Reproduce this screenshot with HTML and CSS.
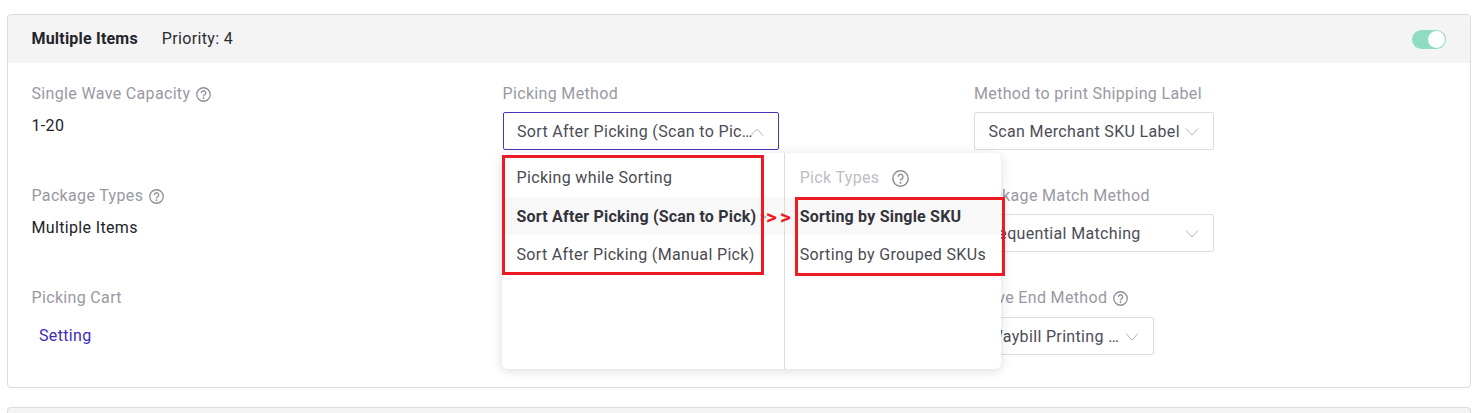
FILE: index.html
```html
<!DOCTYPE html>
<html lang="en">
<head>
<meta charset="utf-8">
<title>Wave rule</title>
<link rel="stylesheet" href="styles.css">
</head>
<body>
<section class="card">
  <header class="card-head">
    <strong class="title">Multiple Items</strong>
    <span class="priority">Priority: 4</span>
    <span class="switch"><span class="knob"></span></span>
  </header>
  <div class="card-body">
    <div class="col">
      <div class="field">
        <div class="label">Single Wave Capacity <svg class="help" viewBox="0 0 16 16"><circle cx="8" cy="8" r="7.2"/><path d="M5.7 6.3a2.3 2.3 0 1 1 3.5 2c-.8.5-1.2.9-1.2 1.8"/><circle class="dot" cx="8" cy="12" r="1"/></svg></div>
        <div class="value">1-20</div>
      </div>
      <div class="field">
        <div class="label">Package Types <svg class="help" viewBox="0 0 16 16"><circle cx="8" cy="8" r="7.2"/><path d="M5.7 6.3a2.3 2.3 0 1 1 3.5 2c-.8.5-1.2.9-1.2 1.8"/><circle class="dot" cx="8" cy="12" r="1"/></svg></div>
        <div class="value">Multiple Items</div>
      </div>
      <div class="field">
        <div class="label">Picking Cart</div>
        <a class="link" href="#">Setting</a>
      </div>
    </div>
    <div class="col">
      <div class="field">
        <div class="label">Picking Method</div>
        <div class="select open">
          <span class="select-text">Sort After Picking (Scan to Pic…</span>
          <svg class="chev" viewBox="0 0 14 8"><path d="M1 7.5l6-6.5 6 6.5"/></svg>
        </div>
      </div>
    </div>
    <div class="col">
      <div class="field">
        <div class="label">Method to print Shipping Label</div>
        <div class="select wide">
          <span class="select-text">Scan Merchant SKU Label</span>
          <svg class="chev" viewBox="0 0 14 8"><path d="M1 .5l6 6.5 6-6.5"/></svg>
        </div>
      </div>
      <div class="field">
        <div class="label">Package Match Method</div>
        <div class="select wide">
          <span class="select-text">Sequential Matching</span>
          <svg class="chev" viewBox="0 0 14 8"><path d="M1 .5l6 6.5 6-6.5"/></svg>
        </div>
      </div>
      <div class="field">
        <div class="label">Wave End Method <svg class="help" viewBox="0 0 16 16"><circle cx="8" cy="8" r="7.2"/><path d="M5.7 6.3a2.3 2.3 0 1 1 3.5 2c-.8.5-1.2.9-1.2 1.8"/><circle class="dot" cx="8" cy="12" r="1"/></svg></div>
        <div class="select narrow">
          <span class="select-text">Waybill Printing …</span>
          <svg class="chev" viewBox="0 0 14 8"><path d="M1 .5l6 6.5 6-6.5"/></svg>
        </div>
      </div>
    </div>
  </div>
  <div class="popup">
    <ul class="menu menu-left">
      <li class="opt">Picking while Sorting</li>
      <li class="opt active">Sort After Picking (Scan to Pick)<span class="caret">&gt;</span></li>
      <li class="opt">Sort After Picking (Manual Pick)</li>
    </ul>
    <ul class="menu menu-right">
      <li class="opt heading">Pick Types <svg class="help big" viewBox="0 0 16 16"><circle cx="8" cy="8" r="7.2"/><path d="M5.7 6.3a2.3 2.3 0 1 1 3.5 2c-.8.5-1.2.9-1.2 1.8"/><circle class="dot" cx="8" cy="12" r="1"/></svg></li>
      <li class="opt active">Sorting by Single SKU</li>
      <li class="opt">Sorting by Grouped SKUs</li>
    </ul>
  </div>
  <div class="mark mark-left"></div>
  <div class="mark mark-right"></div>
  <div class="arrows">&gt; &gt;</div>
</section>
<section class="card next"></section>
</body>
</html>
```

FILE: styles.css
```css
* { box-sizing: border-box; }
html, body { margin: 0; height: 413px; overflow: hidden; }
body {
  padding: 14px 10px 0 7px;
  background: #fff;
  font-family: Roboto, "Liberation Sans", sans-serif;
  font-size: 16px;
  line-height: 24px;
  letter-spacing: .34px;
  color: #2b2b33;
}
.card {
  position: relative;
  height: 374px;
  border: 1px solid #dcdcdc;
  border-radius: 4px;
}
.card.next {
  margin-top: 19px;
  height: 6px;
  border-bottom: 0;
  border-radius: 4px 4px 0 0;
  background: #f4f4f4;
}
.card-head {
  display: flex;
  align-items: center;
  height: 48px;
  padding: 0 24px 0 23.5px;
  background: #f4f4f4;
  border-radius: 4px 4px 0 0;
}
.title { font-weight: 700; letter-spacing: .2px; margin-right: 24px; color: #24242c; }
.priority { color: #2b2b33; }
.switch {
  display: flex;
  justify-content: flex-end;
  align-items: center;
  width: 34px;
  height: 19px;
  margin-left: auto;
  padding-right: 1px;
  border-radius: 10px;
  background: #8fdcc5;
}
.knob { width: 17px; height: 17px; border-radius: 50%; background: #fff; }
.card-body {
  display: grid;
  grid-template-columns: 471px 471.5px 1fr;
  padding: 18px 23.5px 0;
}
.field { height: 102px; padding-top: 1px; }
.label { display: flex; align-items: center; gap: 6px; height: 24px; color: #9a98a3; }
.value { margin-top: 8px; color: #22222a; }
.link { display: block; margin: 14px 0 0 7.5px; color: #3f2bb8; text-decoration: none; }
.help { width: 15px; height: 15px; fill: none; stroke: #8f8e98; stroke-width: 1.4; flex: none; margin-top: 1px; }
.help .dot { fill: #8f8e98; stroke: none; }
.help.big { width: 17px; height: 17px; margin: 0 0 0 13px; }
.select {
  display: flex;
  align-items: center;
  width: 276px;
  height: 38px;
  margin-top: 6px;
  padding: 1px 14px 0 13.5px;
  border: 1px solid #dcdcdc;
  border-radius: 2px;
  color: #4c4c58;
}
.select.wide { width: 240px; }
.select.narrow { width: 180px; margin-top: 7px; }
.select.open { border-color: #4a35b5; }
.select-text { flex: 1; min-width: 0; white-space: nowrap; }
.chev { flex: none; width: 14px; height: 8px; margin-left: 5px; fill: none; stroke: #b4b4bb; stroke-width: 1; }
.select.open .chev { margin-left: -12px; }
.popup {
  position: absolute;
  left: 494px;
  top: 138px;
  display: flex;
  width: 499px;
  height: 216px;
  background: #fff;
  border-radius: 6px;
  box-shadow: 0 2px 12px rgba(0, 0, 0, .14);
}
.menu { margin: 0; padding: 5px 0 0; list-style: none; }
.menu-left { width: 283px; border-right: 1px solid #dcdcdc; }
.menu-right { flex: 1; }
.opt {
  display: flex;
  align-items: center;
  height: 38.5px;
  padding: 2px 15px 0 14.5px;
  white-space: nowrap;
  color: #4a4a52;
}
.opt.active { font-weight: 700; letter-spacing: .2px; background: #f8f8f8; color: #33333b; }
.opt.heading { color: #bdbdc4; }
.menu-right .opt { padding-left: 15px; }
.caret { margin-left: 3px; font-weight: 400; color: #b4b4bb; font-size: 15px; }
.mark { position: absolute; border: 3px solid #ed1c24; }
.mark-left { left: 494px; top: 140px; width: 262px; height: 120px; }
.mark-right { left: 787px; top: 182px; width: 210px; height: 79px; }
.arrows {
  position: absolute;
  left: 758px;
  top: 190px;
  color: #ed1c24;
  font-size: 21px;
  font-weight: 700;
  letter-spacing: 0;
  word-spacing: -2px;
  line-height: 24px;
}
```
